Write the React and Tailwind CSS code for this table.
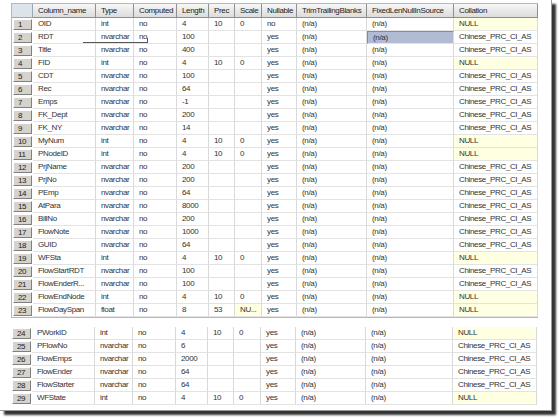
import React from 'react';

const cols = [
  { key: 'name', label: 'Column_name', w: 'w-[63px]' },
  { key: 'type', label: 'Type', w: 'w-[38px]' },
  { key: 'computed', label: 'Computed', w: 'w-[43px]' },
  { key: 'length', label: 'Length', w: 'w-[32px]' },
  { key: 'prec', label: 'Prec', w: 'w-[26px]' },
  { key: 'scale', label: 'Scale', w: 'w-[27px]' },
  { key: 'nullable', label: 'Nullable', w: 'w-[35px]' },
  { key: 'trim', label: 'TrimTrailingBlanks', w: 'w-[70px]' },
  { key: 'fixed', label: 'FixedLenNullInSource', w: 'w-[87px]' },
  { key: 'collation', label: 'Collation', w: 'w-[84px]' },
];

const CN = 'Chinese_PRC_CI_AS';
const intRow = (name) => [name, 'int', 'no', '4', '10', '0', 'yes', '(n/a)', '(n/a)', 'NULL'];
const strRow = (name, len) => [name, 'nvarchar', 'no', len, '', '', 'yes', '(n/a)', '(n/a)', CN];

const top = [
  ['OID', 'int', 'no', '4', '10', '0', 'no', '(n/a)', '(n/a)', 'NULL'],
  strRow('RDT', '100'),
  strRow('Title', '400'),
  intRow('FID'),
  strRow('CDT', '100'),
  strRow('Rec', '64'),
  strRow('Emps', '-1'),
  strRow('FK_Dept', '200'),
  strRow('FK_NY', '14'),
  intRow('MyNum'),
  intRow('PNodeID'),
  strRow('PrjName', '200'),
  strRow('PrjNo', '200'),
  strRow('PEmp', '64'),
  strRow('AtPara', '8000'),
  strRow('BillNo', '200'),
  strRow('FlowNote', '1000'),
  strRow('GUID', '64'),
  intRow('WFSta'),
  strRow('FlowStartRDT', '100'),
  strRow('FlowEnderR...', '100'),
  intRow('FlowEndNode'),
  ['FlowDaySpan', 'float', 'no', '8', '53', 'NU...', 'yes', '(n/a)', '(n/a)', 'NULL'],
];

const bottom = [
  intRow('PWorkID'),
  strRow('PFlowNo', '6'),
  strRow('FlowEmps', '2000'),
  strRow('FlowEnder', '64'),
  strRow('FlowStarter', '64'),
  intRow('WFState'),
];

function RowHead({ n }) {
  return (
    <div className="w-[21px] h-[13px] shrink-0 px-[1px] py-[1px]">
      <div className="h-full bg-[#d6d3cc] border-t border-l border-t-white border-l-white border-b border-r border-b-[#808080] border-r-[#808080] pl-[4px] leading-[10px] text-[#222]">
        {n}
      </div>
    </div>
  );
}

function Row({ n, cells, selected }) {
  return (
    <div className="flex h-[13px]">
      <RowHead n={n} />
      {cols.map((c, i) => {
        const v = cells[i];
        const isNull = v === 'NULL' || v === 'NU...';
        const sel = selected && c.key === 'fixed';
        return (
          <div
            key={c.key}
            className={`${c.w} shrink-0 h-[13px] pl-[5px] leading-[12px] overflow-hidden whitespace-nowrap border-b border-b-[#e3e3e3] border-r border-r-[#dadada] ${
              sel ? 'bg-[#b1bbd3] border border-[#7d8cab]' : isNull ? 'bg-[#ffffe1]' : 'bg-white'
            }`}
          >
            {v}
          </div>
        );
      })}
    </div>
  );
}

export default function App() {
  return (
    <div className="w-[559px] h-[418px] bg-white overflow-hidden" style={{ fontFamily: '"Liberation Sans", Arial, sans-serif' }}>
      <div className="relative w-[552px] h-[411px] bg-white border-r border-b border-[#9a9a9a] shadow-[4px_4px_2px_rgba(0,0,0,0.8)] text-[8px] tracking-[-0.35px] text-[#333]">
        <div className="pt-[3px] pl-[11px]">
          <div className="w-[527px] border border-[#a8bbd3]">
            <div className="flex h-[14px]">
              <div className="w-[21px] shrink-0 bg-[#dde3ea] border-r border-b border-[#9aa6b4]" />
              {cols.map((c) => (
                <div
                  key={c.key}
                  className={`${c.w} shrink-0 pl-[5px] leading-[13px] bg-gradient-to-b from-[#f7f7f7] to-[#dcdcdc] border-r border-b border-r-[#8e8e8e] border-b-[#8e8e8e] whitespace-nowrap overflow-hidden text-[#222]`}
                >
                  {c.label}
                </div>
              ))}
            </div>
            {top.map((r, i) => (
              <Row key={i} n={i + 1} cells={r} selected={i === 1} />
            ))}
          </div>
          <div className="mt-[9px] w-[527px]">
            {bottom.map((r, i) => (
              <Row key={i} n={i + 24} cells={r} />
            ))}
          </div>
        </div>
        <div className="absolute left-[83px] top-[42px] w-[64px] h-[1px] bg-[#555]" />
        <div className="absolute left-[147px] top-[38px] w-[1px] h-[5px] bg-[#555]" />
      </div>
    </div>
  );
}
